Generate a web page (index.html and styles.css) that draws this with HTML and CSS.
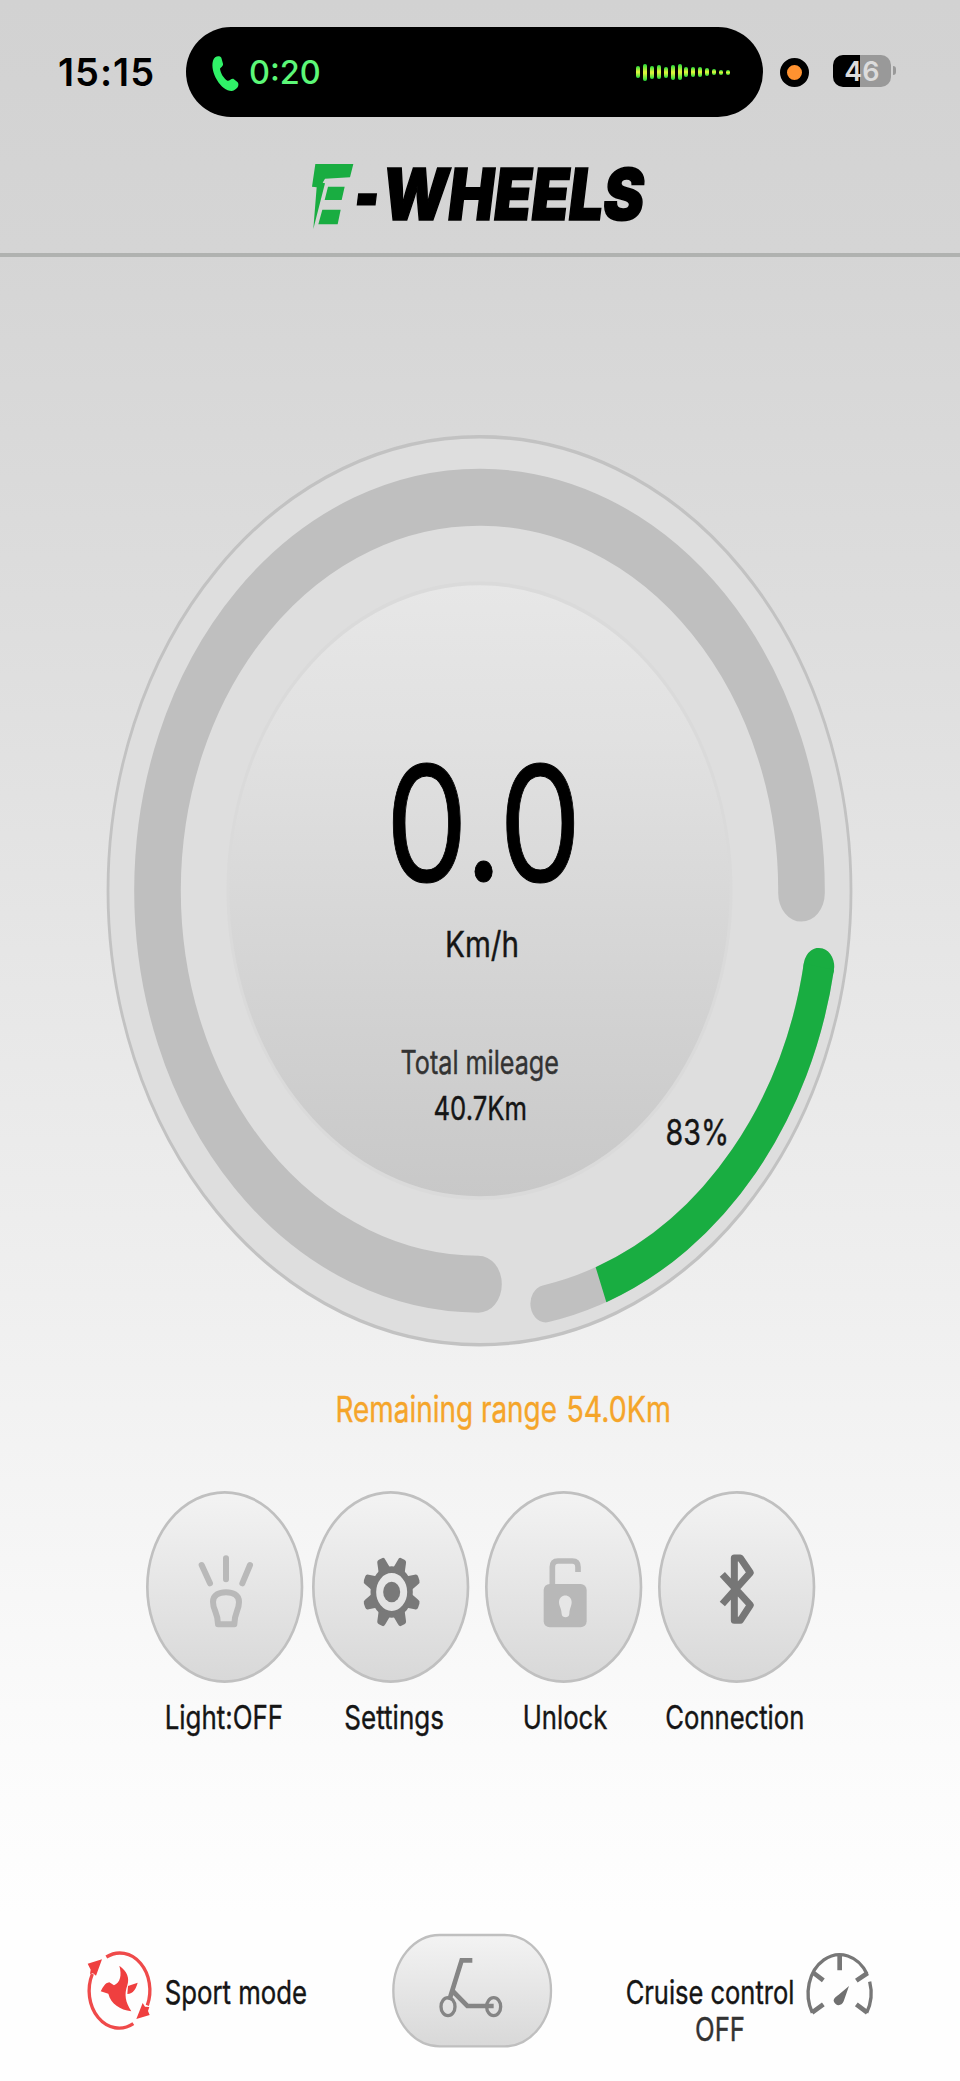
FILE: index.html
```html
<!DOCTYPE html>
<html lang="en">
<head>
<meta charset="utf-8">
<title>E-Wheels</title>
<link rel="stylesheet" href="styles.css">
</head>
<body>
<svg class="defs" width="0" height="0" aria-hidden="true">
  <defs>
    <linearGradient id="button" x1="0" y1="0" x2="0" y2="1"><stop offset="0" stop-color="#f3f3f3"/><stop offset="1" stop-color="#d8d8d8"/></linearGradient>
    <linearGradient id="disc" x1="0" y1="0" x2="0" y2="1"><stop offset="0" stop-color="#e7e7e7"/><stop offset=".25" stop-color="#e1e1e1"/><stop offset="1" stop-color="#c8c8c8"/></linearGradient>
  </defs>
</svg>
<div class="screen">
  <div class="status">
    <span class="clock">15:15</span>
    <div class="island">
      <svg class="phone" width="28" height="38" viewBox="0 0 84 114"><path fill="#30f268" d="M6 17C10 3 25 0 31 8L36 26C37 34 29 36 27 41C29 56 38 69 49 77C55 80 59 70 67 71L80 82C87 92 77 105 63 108C48 109 30 96 18 75C7 57 1 34 6 17Z"/></svg>
      <span class="calltime">0:20</span>
      <div class="wave">
        <i style="height:12px"></i><i style="height:17px"></i><i style="height:13px"></i><i style="height:14px"></i><i style="height:11px"></i><i style="height:15px"></i><i style="height:16px"></i><i style="height:10px"></i><i style="height:10px"></i><i style="height:10px"></i><i style="height:8px"></i><i style="height:6px"></i><i style="height:5px"></i><i style="height:5px"></i>
      </div>
    </div>
    <span class="mic"></span>
    <span class="battery">46</span><span class="nub"></span>
  </div>

  <header class="header">
    <svg width="360" height="90" viewBox="0 0 1080 270">
      <path fill="#19ad41" d="M46 42H160L150 82L75 86L68 98L75 100L40 237L50 112L36 110ZM84 110H134L125 150H74ZM67 179H122L113 223H55Z"/>
      <text class="brand" transform="translate(0 211) skewX(-7)"><tspan x="156" y="0" textLength="74" lengthAdjust="spacingAndGlyphs">-</tspan><tspan x="240" y="0" textLength="785" lengthAdjust="spacingAndGlyphs">WHEELS</tspan></text>
    </svg>
  </header>

  <main>
    <svg class="gauge" width="750" height="914" viewBox="-374.5 -456.7 750 914">
      <g transform="scale(1 1.222)" fill="none">
        <circle r="371.5" fill="#dedede" stroke="#c2c2c2" stroke-width="2.8"/>
        <path d="M322 2A322 322 0 1 0 -1 322" stroke="#bfbfbf" stroke-width="46.6" stroke-linecap="round"/>
        <path d="M339.4 62.1A344.5 344.5 0 0 1 66.2 338" stroke="#c0c0c0" stroke-width="30.6" stroke-linecap="round"/>
        <path d="M339.4 62.1L339.3 62.5" stroke="#19ad41" stroke-width="30.6" stroke-linecap="round"/>
        <path d="M339.4 62.1A344.5 344.5 0 0 1 121.5 322.4" stroke="#19ad41" stroke-width="30.6"/>
        <circle r="251.5" fill="url(#disc)" stroke="#dadada" stroke-width="3"/>
      </g>
      <text class="speed" x="-94" y="-9.5" textLength="196" lengthAdjust="spacingAndGlyphs">0.0</text>
      <text class="t36" x="-34.5" y="66.3" textLength="74" lengthAdjust="spacingAndGlyphs">Km/h</text>
      <text class="t32 dim" x="-79" y="183.8" textLength="158.5" lengthAdjust="spacingAndGlyphs">Total mileage</text>
      <text class="t33" x="-46" y="229.8" textLength="93.5" lengthAdjust="spacingAndGlyphs">40.7Km</text>
      <text class="t36" x="186" y="254.8" textLength="63.5" lengthAdjust="spacingAndGlyphs">83%</text>
    </svg>

    <svg class="range" width="350" height="50" viewBox="330 1385 350 50">
      <text class="t36 amber"><tspan x="335.5" y="1421.5" textLength="221.5" lengthAdjust="spacingAndGlyphs">Remaining range</tspan><tspan x="566.5" y="1421.5" textLength="104.5" lengthAdjust="spacingAndGlyphs">54.0Km</tspan></text>
    </svg>

    <nav class="controls">
      <svg width="158" height="250" viewBox="48 360 474 750">
        <ellipse class="btn" cx="284" cy="651" rx="232" ry="284"/>
        <g fill="none" stroke="#b9b9b9" stroke-linecap="round" stroke-linejoin="round" stroke-width="18">
          <path d="M215 585L240 640M288 565V628M360 585L337 640"/>
          <path stroke-width="18" d="M249 696C249 674 268 667 288 667C308 667 327 674 327 696C327 722 313 726 313 763H264C264 726 249 722 249 696Z"/>
        </g>
        <text class="label" x="104" y="1076" textLength="355" lengthAdjust="spacingAndGlyphs">Light:OFF</text>
      </svg>
      <svg width="158" height="250" viewBox="546 360 474 750">
        <ellipse class="btn" cx="782" cy="651" rx="232" ry="284"/>
        <g transform="translate(785 666) scale(1 1.22)" fill="#797979">
          <circle r="55" fill="none" stroke="#797979" stroke-width="17"/>
          <circle r="25.5"/>
          <g id="teeth"><path id="tooth" transform="rotate(22.5)" d="M-19-54L-13-80Q-12-88-5-88H5Q12-88 13-80L19-54Z"/>
          <use href="#tooth" transform="rotate(45)"/><use href="#tooth" transform="rotate(90)"/><use href="#tooth" transform="rotate(135)"/></g>
          <use href="#teeth" transform="rotate(180)"/>
        </g>
        <text class="label" x="643" y="1076" textLength="299" lengthAdjust="spacingAndGlyphs">Settings</text>
      </svg>
      <svg width="158" height="250" viewBox="45 360 474 750">
        <ellipse class="btn" cx="281" cy="651" rx="232" ry="284"/>
        <path fill="none" stroke="#bababa" stroke-width="17" d="M247 648V591Q247 573 264 573H307Q324 573 324 591V606"/>
        <rect x="221" y="642" width="129" height="130" rx="18" fill="#b8b8b8"/>
        <path fill="#e6e6e6" d="M267 697C267 670 305 670 305 697C305 708 299 714 298 732C297 745 276 745 275 732C274 714 267 708 267 697Z"/>
        <text class="label" x="158" y="1076" textLength="254" lengthAdjust="spacingAndGlyphs">Unlock</text>
      </svg>
      <svg width="158" height="250" viewBox="565 360 474 750">
        <ellipse class="btn" cx="801" cy="651" rx="232" ry="284"/>
        <path fill="none" stroke="#767676" stroke-width="21" stroke-linejoin="round" d="M758 613L842 705L812 751H794V564H812L842 608L758 702"/>
        <text class="label" x="587" y="1076" textLength="417" lengthAdjust="spacingAndGlyphs">Connection</text>
      </svg>
    </nav>
  </main>

  <footer class="footer">
    <svg class="sport" width="226" height="120" viewBox="72 90 678 360">
      <g fill="none" stroke="#ef4a4a" stroke-width="10">
        <path d="M139 171A90 112 0 0 1 262 316M220 371A90 112 0 0 1 97 222"/>
      </g>
      <g fill="#ef3f3f">
        <path d="M83 191L126 178L108 227L99 220L90 222L92 209ZM229 357L248 309L255 320L268 321L264 333L269 345Z"/>
        <path d="M178 197C202 214 209 234 202 256C192 284 196 306 214 334C180 329 153 312 145 281L122 274C130 261 134 249 148 247L162 256C181 247 186 226 178 197ZM204 258L233 248C228 267 220 280 202 282Z"/>
      </g>
      <text class="label" x="314" y="312" textLength="427" lengthAdjust="spacingAndGlyphs">Sport mode</text>
    </svg>
    <svg class="scooter" width="164" height="120" viewBox="990 90 492 360">
      <rect x="1000" y="105" width="473" height="334" rx="139" ry="167" fill="url(#button)" stroke="#bfbfbf" stroke-width="7"/>
      <g fill="none" stroke="#858585" stroke-width="14">
        <path d="M1237 181H1205L1168 300M1175 270L1222 318H1301"/>
        <ellipse cx="1164" cy="320" rx="21" ry="27" stroke-width="10"/><ellipse cx="1301" cy="320" rx="21" ry="27" stroke-width="10"/>
      </g>
    </svg>
    <svg class="cruise" width="254" height="120" viewBox="426 90 762 360">
      <text class="label" x="437" y="312" textLength="506" lengthAdjust="spacingAndGlyphs">Cruise control</text>
      <text class="label dim" x="645" y="422" textLength="150" lengthAdjust="spacingAndGlyphs">OFF</text>
      <g fill="none" stroke="#777" stroke-width="10">
        <path d="M997 338A94 115 0 1 1 1161 222M1169 245A94 115 0 0 1 1160 338"/>
        <path stroke-width="14" d="M1079 162V211M1001 219L1030 241M1163 219L1129 242M996 338L1030 313M1162 338L1129 313"/>
      </g>
      <path fill="#707070" d="M1107 258L1091 304C1084 320 1066 319 1061 303C1061 294 1069 290 1075 285Z"/>
    </svg>
  </footer>
</div>
</body>
</html>
```
FILE: styles.css
```css
* { box-sizing: border-box; }
body { margin: 0; font-family: Inter, "Liberation Sans", sans-serif; color: #111; }
svg { display: block; flex: none; overflow: visible; }
.defs { height: 0; }

.screen {
  width: 960px;
  height: 2081px;
  overflow: hidden;
  background: linear-gradient(#d2d2d2, #d5d5d5 12%, #dadada 23%, #e4e4e4 42%, #f0f0f0 64%, #fbfbfb 84%, #fefefe 92%);
}

.status { display: flex; align-items: center; height: 144px; padding-left: 58px; }
.clock { width: 128px; font-size: 38px; font-weight: 600; letter-spacing: 1px; color: #000; white-space: nowrap; }
.island {
  display: flex;
  align-items: center;
  width: 577px;
  height: 90px;
  padding: 0 33px 0 25px;
  border-radius: 45px;
  background: #000;
}
.phone { margin-top: 3px; }
.calltime { margin-left: 10px; font-size: 32.5px; font-weight: 500; color: #5cf878; }
.wave { display: flex; align-items: center; gap: 2.93px; margin-left: auto; }
.wave i { width: 4px; border-radius: 2px; background: linear-gradient(#22dd3a, #d9f23c 45%, #d9f23c 55%, #22dd3a); }
.mic { width: 29px; height: 29px; margin: 1px 0 0 17px; border: 7.5px solid #000; border-radius: 50%; background: #ff9230; }
.battery {
  width: 58px;
  height: 32px;
  margin: -2px 0 0 24px;
  border-radius: 10px;
  background: linear-gradient(90deg, #000 27px, #999 27px);
  color: #dcdcdc;
  font-size: 27px;
  font-weight: 600;
  line-height: 33px;
  text-align: center;
}
.nub { width: 3px; height: 9px; margin: -3px 0 0 2px; border-radius: 0 5px 5px 0; background: #999; }

.header { height: 113px; padding: 6px 0 0 300px; border-bottom: 4px solid #b0b2b0; }

text { fill: #151515; stroke: #151515; stroke-width: .4px; }
.speed { font-size: 160px; fill: #000; stroke: #000; stroke-width: 1px; }
.t32 { font-size: 32.5px; }
.t33 { font-size: 33px; }
.t36 { font-size: 35.5px; }
.dim { fill: #333; stroke: #333; }
.amber { fill: #f5a52a; stroke: #f5a52a; }
.brand { font-size: 214px; font-weight: 900; fill: #000; stroke: #000; stroke-width: 5px; }
.label { font-size: 98px; stroke-width: 1.2px; }

.gauge { margin: 177px 0 0 105px; }
.range { margin: 37px 0 0 330px; }

.controls {
  display: grid;
  grid-template-columns: 166px 173px 173px 158px;
  padding: 55px 0 0 146px;
}
.btn { fill: url(#button); stroke: #c0c0c0; stroke-width: 8px; }

.footer { display: flex; margin-top: 190px; padding-left: 84px; }
.scooter { margin: 0 68px 0 80px; }
```
